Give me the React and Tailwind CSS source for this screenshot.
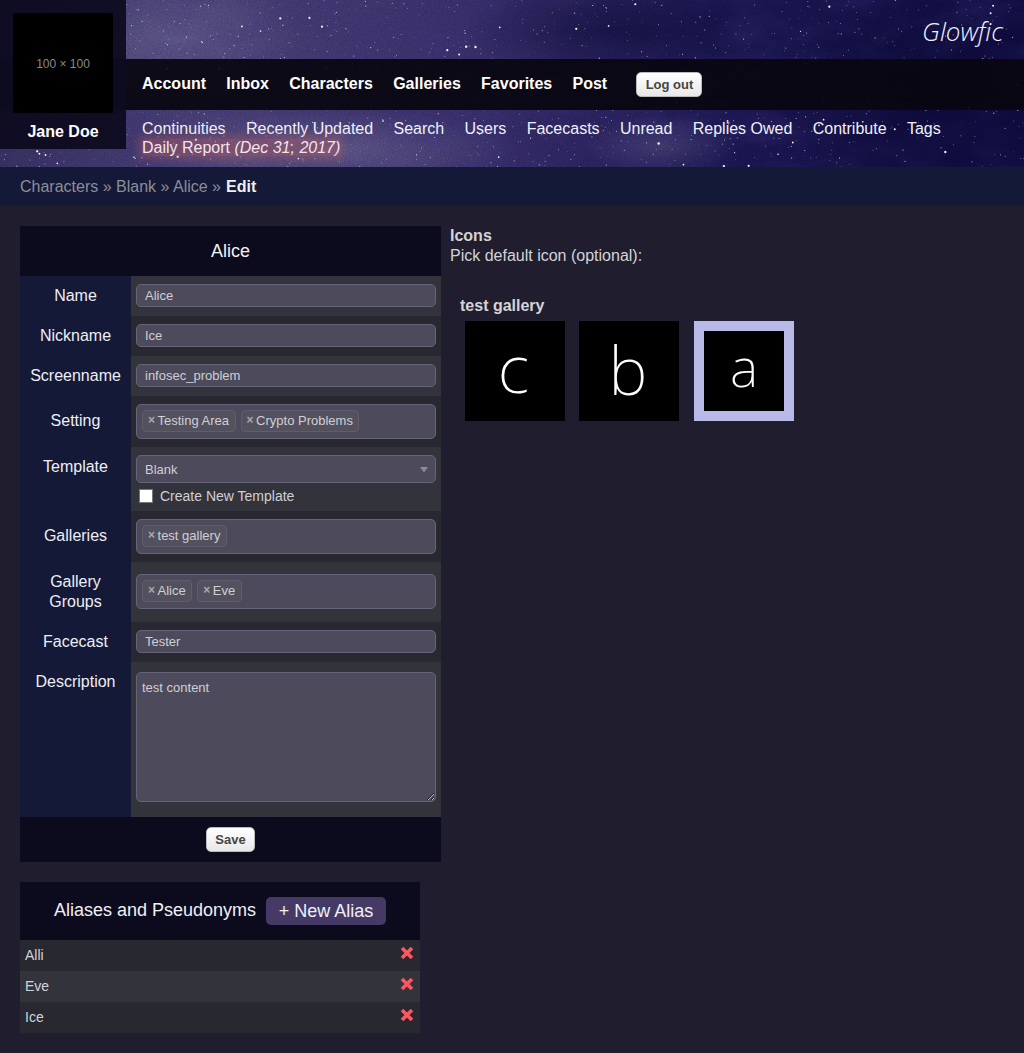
const FONT = { fontFamily: '"Liberation Sans", Arial, sans-serif' };

// seeded so the sky comes out the same on every run
function makeStars(count) {
  let seed = 4711;
  const rnd = () => {
    seed = (seed * 16807) % 2147483647;
    return seed / 2147483647;
  };
  const stars = [];
  for (let i = 0; i < count; i++) {
    const big = rnd() > 0.94;
    stars.push({
      x: rnd() * 1024,
      y: rnd() * 167,
      r: big ? 0.8 + rnd() * 0.5 : 0.3 + rnd() * 0.3,
      o: big ? 0.95 : 0.3 + rnd() * 0.6,
    });
  }
  return stars;
}
const STARS = makeStars(1300);

function Sky() {
  return (
    <svg className="absolute inset-0 w-full h-full" viewBox="0 0 1024 167" preserveAspectRatio="none">
      <defs>
        <linearGradient id="sky" x1="0" y1="0" x2="1" y2="0">
          <stop offset="0" stopColor="#3a3468" />
          <stop offset="0.2" stopColor="#4e447c" />
          <stop offset="0.45" stopColor="#3d3372" />
          <stop offset="0.7" stopColor="#1e1956" />
          <stop offset="1" stopColor="#110d46" />
        </linearGradient>
        <radialGradient id="band1">
          <stop offset="0" stopColor="#6c6696" stopOpacity="0.75" />
          <stop offset="1" stopColor="#6c6696" stopOpacity="0" />
        </radialGradient>
        <radialGradient id="band2">
          <stop offset="0" stopColor="#0c0a3a" stopOpacity="0.8" />
          <stop offset="1" stopColor="#0c0a3a" stopOpacity="0" />
        </radialGradient>
        <filter id="grain">
          <feTurbulence type="fractalNoise" baseFrequency="0.7" numOctaves="2" seed="3" />
          <feColorMatrix values="0 0 0 0 0  0 0 0 0 0  0 0 0 0 0  0.9 0 0 0 -0.25" />
        </filter>
        <filter id="cloud">
          <feTurbulence type="fractalNoise" baseFrequency="0.018 0.035" numOctaves="4" seed="8" />
          <feColorMatrix values="0 0 0 0 0.05  0 0 0 0 0.04  0 0 0 0 0.22  1.8 0 0 0 -0.62" />
        </filter>
      </defs>
      <rect width="1024" height="167" fill="url(#sky)" />
      <ellipse cx="170" cy="40" rx="130" ry="65" fill="url(#band1)" />
      <ellipse cx="330" cy="150" rx="190" ry="40" fill="url(#band1)" />
      <ellipse cx="660" cy="145" rx="80" ry="30" fill="url(#band1)" opacity="0.6" />
      <rect width="1024" height="167" filter="url(#cloud)" opacity="0.35" />
      <ellipse cx="620" cy="30" rx="160" ry="50" fill="url(#band2)" opacity="0.7" />
      <ellipse cx="930" cy="100" rx="170" ry="110" fill="url(#band2)" />
      <rect width="1024" height="167" filter="url(#grain)" opacity="0.35" />
      {STARS.map((s, i) => (
        <circle key={i} cx={s.x} cy={s.y} r={s.r} fill="#fff" opacity={s.o} />
      ))}
    </svg>
  );
}

function Header() {
  const main = ["Account", "Inbox", "Characters", "Galleries", "Favorites", "Post"];
  const sub = ["Continuities", "Recently Updated", "Search", "Users", "Facecasts", "Unread", "Replies Owed", "Contribute", "Tags"];
  return (
    <header className="relative h-[167px] overflow-hidden">
      <Sky />
      <div className="relative pt-[59px]">
        <nav className="h-[51px] bg-[#08070fec] pl-[142px] flex items-center gap-[20.3px] text-white font-bold text-base">
          {main.map((m) => <span key={m} className="-mt-[1px]">{m}</span>)}
          <button className="ml-[9px] w-[66px] h-[25px] rounded-[5px] border border-[#bbb] bg-gradient-to-b from-white to-[#e8e8e8] text-[#444] text-[13px] font-bold">Log out</button>
        </nav>
        <div className="pl-[142px] pt-[9px] text-base leading-[19px] text-[#f0f0f8]">
          <div className="flex gap-[20.35px]">
            {sub.map((s) => <span key={s}>{s}</span>)}
          </div>
          <div className="text-[#f4e4ea]">
            <span className="bg-[#c0606060] shadow-[0_0_8px_3px_#c0606060]">Daily Report <i>(Dec 31, 2017)</i></span>
          </div>
        </div>
      </div>
      {/* user box sits on top of the nav bar */}
      <div className="absolute left-0 top-0 w-[126px] h-[149px] bg-[#0e0c20f2] pt-[13px] pl-[13px]">
        <div className="w-[100px] h-[100px] bg-black flex items-center justify-center pt-[2px] text-[12px] text-[#8a8a8a]">100 × 100</div>
        <div className="-ml-[13px] w-[126px] mt-[9px] text-center text-white font-bold text-base leading-[19px]">Jane Doe</div>
      </div>
      <div className="absolute right-[21px] top-[14px] text-[26px] leading-[34px] font-light italic text-[#f2f2fa]" style={{ fontFamily: '"Open Sans", sans-serif' }}>Glowfic</div>
    </header>
  );
}

function Row({ label, odd, h, top, labelTop, children }) {
  return (
    <div className="flex" style={{ height: h }}>
      <div className={`w-[111px] shrink-0 bg-[#141938] flex justify-center text-center text-base leading-[20px] text-[#eeeef4] px-2 ${labelTop ? "items-start pt-[10px]" : "items-center pb-[1px]"}`}>
        {label}
      </div>
      <div className={`flex-1 pl-[5px] pr-[5px] ${odd ? "bg-[#33333c]" : "bg-[#282830]"}`} style={{ paddingTop: top }}>
        {children}
      </div>
    </div>
  );
}

const fieldCls = "block w-[300px] bg-[#4d4a5b] border border-[#66647a] rounded-[5px] text-[13px] text-[#cfcfd4] outline-none";

function Field({ value }) {
  return <input readOnly value={value} className={`${fieldCls} h-[23px] px-[8px]`} />;
}

function Chips({ items }) {
  return (
    <div className={`${fieldCls} h-[35px] flex items-start gap-[5px] pl-[5px] pt-[5px]`}>
      {items.map((c) => (
        <span key={c} className="h-[22px] flex items-center gap-[2.5px] pl-[5px] pr-[5.5px] pb-[2px] bg-[#54515f] border border-[#5e5c6e] rounded-[4px] leading-none">
          <span className="text-[#a8a8a8] font-bold text-[12px]">×</span>{c}
        </span>
      ))}
    </div>
  );
}

function Form() {
  return (
    <section className="w-[421px]">
      <div className="h-[50px] bg-[#0c0b1e] flex items-center justify-center text-[18px] text-[#f0f0f4]">Alice</div>
      <Row label="Name" odd h={40} top={8}><Field value="Alice" /></Row>
      <Row label="Nickname" h={40} top={8}><Field value="Ice" /></Row>
      <Row label="Screenname" odd h={40} top={8}><Field value="infosec_problem" /></Row>
      <Row label="Setting" h={51} top={8}><Chips items={["Testing Area", "Crypto Problems"]} /></Row>
      <Row label="Template" odd h={64} top={8} labelTop>
        <div className={`${fieldCls} h-[28px] flex items-center justify-between pl-[8px] pr-[6px] pt-[1px]`}>
          Blank
          <svg width="10" height="6" viewBox="0 0 10 6"><path d="M1 0h8L5 5.5z" fill="#8a8a90" /></svg>
        </div>
        <label className="flex items-center mt-[6px] text-[14px] leading-[14px] text-[#cfcfd4]">
          <span className="w-[14px] h-[14px] ml-[3px] mr-[7px] bg-white border border-[#777]" />
          Create New Template
        </label>
      </Row>
      <Row label="Galleries" h={51} top={8}><Chips items={["test gallery"]} /></Row>
      <Row label={<>Gallery<br />Groups</>} odd h={60} top={12}><Chips items={["Alice", "Eve"]} /></Row>
      <Row label="Facecast" h={40} top={8}><Field value="Tester" /></Row>
      <Row label="Description" odd h={155} top={10} labelTop>
        <textarea readOnly value="test content" className={`${fieldCls} h-[130px] px-[5px] py-[5px] resize-y`} />
      </Row>
      <div className="h-[45px] bg-[#0c0b1e] flex items-center justify-center">
        <button className="w-[49px] h-[25px] rounded-[5px] border border-[#bbb] bg-gradient-to-b from-white to-[#e8e8e8] text-[#444] text-[13px] font-bold">Save</button>
      </div>
    </section>
  );
}

function Aliases() {
  return (
    <section className="w-[400px] mt-[20px]">
      <div className="h-[58px] bg-[#0c0b1e] flex items-center justify-center gap-[10px] text-[18px] text-[#f0f0f4]">
        <span className="-mt-[2px]">Aliases and Pseudonyms</span>
        <span className="w-[120px] h-[28px] rounded-[5px] bg-[#453a66] flex items-center justify-center">+ New Alias</span>
      </div>
      {["Alli", "Eve", "Ice"].map((a, i) => (
        <div key={a} className={`h-[31px] flex items-center justify-between pl-[5px] pr-[6px] text-[14px] text-[#d4d4d8] ${i === 1 ? "bg-[#33333c]" : "bg-[#282830]"}`}>
          {a}
          <svg width="14" height="14" viewBox="0 0 14 14" className="-mt-[6px]">
            <path d="M2 2l10 10M12 2L2 12" stroke="#ff5560" strokeWidth="3.6" />
          </svg>
        </div>
      ))}
    </section>
  );
}

function IconTile({ letter, size, selected, gap, lift, shift }) {
  return (
    <div
      className={`w-[100px] h-[100px] bg-black flex items-center justify-center text-white font-extralight ${selected ? "border-[10px] border-[#b9b9e8]" : ""}`}
      style={{ fontFamily: '"Noto Sans", sans-serif', fontSize: size, marginLeft: gap }}
    >
      <span style={{ marginTop: -lift, marginLeft: shift }}>{letter}</span>
    </div>
  );
}

function Icons() {
  return (
    <section className="ml-[9px] text-base leading-[20px] text-[#d4d4d8]">
      <div className="font-bold">Icons</div>
      <div>Pick default icon (optional):</div>
      <div className="mt-[30px] ml-[10px] font-bold">test gallery</div>
      <div className="flex mt-[5px] ml-[15px]">
        <IconTile letter="c" size={66} gap={0} lift={8} shift={-3} />
        <IconTile letter="b" size={66} gap={14} lift={4} shift={-2} />
        <IconTile letter="a" size={54} selected gap={15} lift={10} shift={0} />
      </div>
    </section>
  );
}

export default function App() {
  return (
    <div className="min-h-[1053px] bg-[#201e2e]" style={FONT}>
      <Header />
      <div className="h-[39px] bg-[#141938] pl-[20px] flex items-center text-base text-[#8d8d99]">
        Characters » Blank » Alice » <b className="ml-[5px] text-[#eeeef2]">Edit</b>
      </div>
      <div className="flex items-start pt-[20px] pl-[20px]">
        <div>
          <Form />
          <Aliases />
        </div>
        <Icons />
      </div>
    </div>
  );
}
